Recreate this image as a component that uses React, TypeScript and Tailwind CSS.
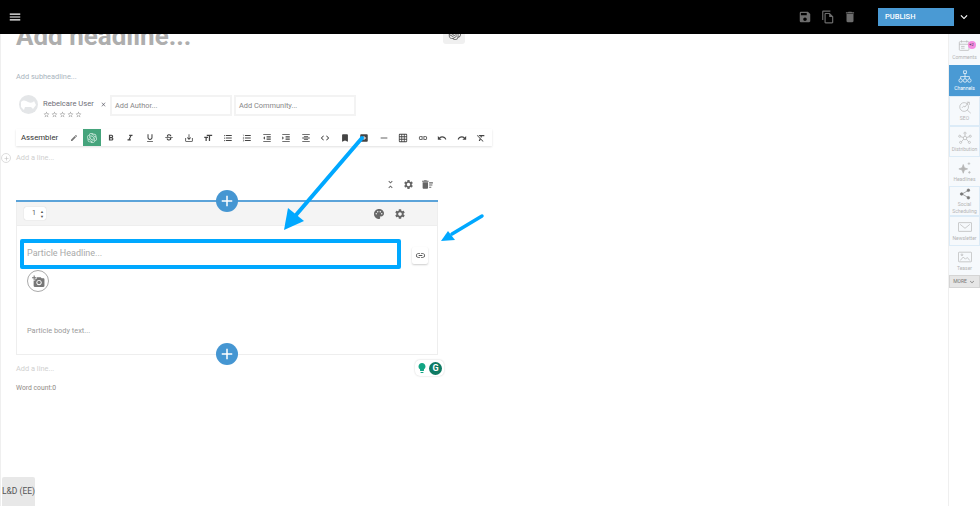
import * as React from 'react'
import {
  MdAddAPhoto, MdAddBox, MdBookmark, MdClose, MdCode, MdDelete, MdEdit, MdFormatAlignCenter, MdFormatBold,
  MdFormatClear, MdFormatIndentDecrease, MdFormatIndentIncrease, MdFormatItalic, MdFormatListBulleted,
  MdFormatListNumbered, MdFormatSize, MdFormatUnderlined, MdGridOn, MdHorizontalRule, MdLink, MdMenu, MdPalette,
  MdRedo, MdSave, MdSettings, MdStrikethroughS, MdUndo, MdAdd, MdKeyboardArrowDown, MdUnfoldLess, MdDeleteSweep,
  MdLightbulb, MdOutlineFileCopy, MdStarBorder, MdOutlineSaveAlt,
} from 'react-icons/md'
import { SiOpenai } from 'react-icons/si'

const toolbarIcons = [
  MdFormatBold, MdFormatItalic, MdFormatUnderlined, MdStrikethroughS, MdOutlineSaveAlt, MdFormatSize,
  MdFormatListBulleted, MdFormatListNumbered, MdFormatIndentDecrease, MdFormatIndentIncrease, MdFormatAlignCenter,
  MdCode, MdBookmark, MdAddBox, MdHorizontalRule, MdGridOn, MdLink, MdUndo, MdRedo, MdFormatClear,
]

// thin line icons of the side rail, drawn on a 16 box
const railPaths: Record<string, React.ReactNode> = {
  Comments: (
    <>
      <rect x="1.5" y="3" width="11" height="10" rx="1" />
      <path d="M1.5 6h11M4 1.5v2.5M10 1.5v2.5M3.5 8.5h4M3.5 10.5h4" />
    </>
  ),
  Channels: (
    <>
      <rect x="6.5" y="1" width="3" height="3" />
      <path d="M8 4v3M3 10V7.5h10V10M8 7v3" />
      <circle cx="3" cy="12" r="2" />
      <circle cx="8" cy="12" r="2" />
      <circle cx="13" cy="12" r="2" />
    </>
  ),
  SEO: (
    <>
      <circle cx="7" cy="8" r="5" />
      <path d="M10.5 11.5L14.5 15M4.5 9l2-2 1.5 1 4-5.5M10 2.5h3v3" />
    </>
  ),
  Distribution: (
    <>
      <circle cx="8" cy="8" r="2" />
      <circle cx="8" cy="2.5" r="1.2" />
      <circle cx="2" cy="6" r="1.2" />
      <circle cx="14" cy="6" r="1.2" />
      <circle cx="3" cy="13" r="1.2" />
      <circle cx="13" cy="13" r="1.2" />
      <path d="M8 4v2M3 6.5l3.2 1M13 6.5l-3.2 1M4 12.3l2.5-3M12 12.3l-2.5-3" />
    </>
  ),
  Headlines: (
    <>
      <path d="M6 4l1.3 3.7L11 9l-3.7 1.3L6 14l-1.3-3.7L1 9l3.7-1.3z" fill="currentColor" />
      <path d="M12.5 1.5v3M11 3h3M13 11.5v3M11.5 13h3" />
    </>
  ),
  'Social Scheduling': (
    <>
      <circle cx="12.5" cy="3" r="1.8" fill="currentColor" />
      <circle cx="3.5" cy="8" r="1.8" fill="currentColor" />
      <circle cx="12.5" cy="13" r="1.8" fill="currentColor" />
      <path d="M12 3.5L4 8l8 4.5" />
    </>
  ),
  Newsletter: (
    <>
      <rect x="0.5" y="3" width="15" height="10" rx="0.5" />
      <path d="M2.5 5L8 9.5 13.5 5" />
    </>
  ),
  Teaser: (
    <>
      <rect x="0.5" y="2.5" width="15" height="11" rx="1" />
      <path d="M2.5 12l3.5-4 2.5 2.5 2-2 3 3.5" />
      <circle cx="4.5" cy="5.5" r="1" />
    </>
  ),
}

const sideItems = [
  { label: 'Comments', h: 'h-[31px]' },
  { label: 'Channels', h: 'h-[31px]', active: true },
  { label: 'SEO', h: 'h-[30px]', boxed: true },
  { label: 'Distribution', h: 'h-[31px]', boxed: true },
  { label: 'Headlines', h: 'h-[29px]' },
  { label: 'Social Scheduling', h: 'h-[30px]', boxed: true },
  { label: 'Newsletter', h: 'h-[30px]', boxed: true },
  { label: 'Teaser', h: 'h-[29px]' },
]

const PlusButton = () => (
  <div className="w-[22px] h-[22px] rounded-full bg-[#4596d2] flex items-center justify-center text-white">
    <MdAdd size={18} />
  </div>
)

export default function App() {
  return (
    <div className="relative w-[980px] h-[506px] overflow-hidden bg-white flex flex-col font-['Roboto',sans-serif]">
      {/* Top bar */}
      <header className="relative z-10 h-[34px] shrink-0 bg-black flex items-center pl-[8px] text-white">
        <MdMenu size={14} />
        <div className="ml-auto flex items-center text-[#6d6d6d]">
          <MdSave size={14} />
          <MdOutlineFileCopy size={14} className="ml-[9px]" />
          <MdDelete size={14} className="ml-[8px]" />
        </div>
        <div className="ml-[21px] w-[76px] h-[18px] bg-[#4a9ad4] flex items-center pl-[7px] text-[7.5px] font-medium text-white">PUBLISH</div>
        <MdKeyboardArrowDown size={14} className="ml-[3px] mr-[9px]" />
      </header>

      <div className="flex flex-1 min-h-0">
        {/* Editor */}
        <main className="relative flex-1 min-w-0 border-l border-[#efefef]">
          <div className="-mt-[17px] ml-[15px] h-[39px]">
            <div className="text-[26px] leading-[39px] font-bold text-[#aeaeae] whitespace-nowrap">Add headline...</div>
            <div className="absolute left-[442px] -top-[12px] w-[22px] h-[22px] rounded-[3px] bg-[#f0f0f0] flex items-center justify-center text-[#666]">
              <SiOpenai size={13} />
            </div>
          </div>

          <div className="mt-[16px] ml-[15px] text-[7.4px] leading-[10px] text-[#a9b4bd]">Add subheadline...</div>

          <div className="mt-[13px] ml-[18px] flex items-start">
            <div className="w-[19px] h-[19px] rounded-full bg-[#e4e6e8] overflow-hidden">
              <svg viewBox="0 0 19 19" className="w-full h-full">
                <path d="M2 7c3-3 5-1 7 0s5 1 6-1l2 4-3 4-2-2H6l-1 3-3-3z" fill="#fff" />
              </svg>
            </div>
            <div className="ml-[5px] w-[58px]">
              <div className="mt-[3px] flex items-center text-[7.6px] leading-[12px] text-[#6e6e78] whitespace-nowrap">
                Rebelcare User
                <MdClose size={7} className="ml-[6px] shrink-0" />
              </div>
              <div className="mt-[1px] flex gap-[1px] text-[#9a9a9a]">
                {[0, 1, 2, 3, 4].map((i) => <MdStarBorder key={i} size={7} />)}
              </div>
            </div>
            <div className="ml-[9px] w-[122px] h-[21px] border-2 border-[#f3f3f3] flex items-center pl-[3px] text-[7.4px] text-[#888]">Add Author...</div>
            <div className="ml-[2px] w-[122px] h-[21px] border-2 border-[#f3f3f3] flex items-center pl-[3px] text-[7.4px] text-[#888]">Add Community...</div>
          </div>

          {/* Toolbar */}
          <div className="mt-[11px] ml-[15px] w-[476px] h-[17px] flex items-center bg-white shadow-[0_1px_2px_rgba(0,0,0,0.12)] text-[#444]">
            <span className="ml-[5px] w-[49px] text-[7.8px] text-[#333]">Assembler</span>
            <MdEdit size={8} className="text-[#777]" />
            <div className="ml-[5px] w-[18px] h-[17px] bg-[#45a47c] flex items-center justify-center text-[#d8efe5]">
              <SiOpenai size={10} />
            </div>
            <div className="flex">
              {toolbarIcons.map((Icon, i) => (
                <div key={i} className="w-[19.5px] flex justify-center"><Icon size={10} /></div>
              ))}
            </div>
          </div>

          <div className="mt-[7px] flex items-center h-[10px]">
            <div className="w-[10px] h-[10px] rounded-full border border-[#ddd] flex items-center justify-center text-[#bbb]">
              <MdAdd size={7} />
            </div>
            <span className="ml-[5px] text-[7.4px] text-[#cfcfcf]">Add a line...</span>
          </div>

          <div className="mt-[15px] ml-[384px] flex items-center h-[12px] text-[#666] gap-[7px] w-fit">
            <MdUnfoldLess size={11} />
            <MdSettings size={11} />
            <MdDeleteSweep size={13} />
          </div>

          {/* Particle */}
          <section className="relative mt-[10px] ml-[15px] w-[422px] h-[155px] border border-[#eee] border-t-0">
            <div className="absolute left-[199px] -top-[10px] z-[1]"><PlusButton /></div>
            <div className="-ml-px -mr-px h-[2px] bg-[#5ba3d9]" />
            <div className="h-[24px] bg-[#f4f4f4] border-b border-[#eee] flex items-center pl-[7px] text-[#666]">
              <div className="w-[22px] h-[13px] bg-white rounded-[2px] shadow-[0_0_1px_rgba(0,0,0,0.25)] flex items-center pl-[8px] text-[7px] text-[#555]">
                1<span className="ml-[4px] flex flex-col text-[4px] leading-[5px]"><span>▲</span><span>▼</span></span>
              </div>
              <MdPalette size={12} className="ml-[327px]" />
              <MdSettings size={12} className="ml-[9px]" />
            </div>

            <div className="mt-[13px] ml-[3px] flex items-center">
              <div className="w-[381px] h-[30px] border-[4px] border-[#00a8ff] rounded-[2px] flex items-center pl-[3px] text-[9px] text-[#a9a9a9]">Particle Headline...</div>
              <div className="ml-[11px] mt-[2px] w-[16px] h-[17px] rounded-[2px] bg-white shadow-[0_1px_2px_rgba(0,0,0,0.2)] flex items-center justify-center text-[#555]">
                <MdLink size={11} />
              </div>
            </div>
            <div className="mt-[1px] ml-[10px] w-[22px] h-[22px] rounded-full border border-[#aaa] flex items-center justify-center text-[#777]">
              <MdAddAPhoto size={13} />
            </div>
            <div className="mt-[34px] ml-[10px] text-[7.4px] leading-[10px] text-[#9a9a9a]">Particle body text...</div>
            <div className="absolute left-[199px] -bottom-[11px]"><PlusButton /></div>
          </section>

          <div className="relative mt-[9px] ml-[15px] h-[10px] text-[7.4px] leading-[10px] text-[#cfcfcf]">
            Add a line...
            <div className="absolute left-[399px] -top-[4px] w-[29px] h-[16px] rounded-[5px] bg-white shadow-[0_0_2px_rgba(0,0,0,0.2)] flex items-center pl-[1px]">
              <MdLightbulb size={12} className="text-[#12a584]" />
              <div className="ml-[1px] w-[13px] h-[13px] rounded-full bg-[#0f7a63] text-white text-[9px] leading-[13px] text-center font-bold">G</div>
            </div>
          </div>

          <div className="mt-[9px] ml-[15px] text-[6.8px] leading-[10px] text-[#8f8a85]">Word count:0</div>

          <div className="absolute left-[1px] bottom-0 w-[33px] h-[29px] rounded-t-[2px] bg-[#e8e8e8] flex items-center justify-center text-[8.5px] text-[#555] whitespace-nowrap">L&amp;D (EE)</div>
        </main>

        {/* Side rail */}
        <aside className="w-[32px] shrink-0 border-l border-[#efefef] flex flex-col items-stretch">
          {sideItems.map(({ label, h, active, boxed }) => (
            <div
              key={label}
              className={`${h} flex flex-col items-center justify-center gap-[1px] text-center text-[5px] leading-[7px] ${
                active ? 'bg-[#4a9ad4] text-white' : 'bg-[#f6f9fc] text-[#b4b4b4]'
              } ${boxed ? 'border border-[#dcebf7]' : ''}`}
            >
              <div className="relative">
                <svg viewBox="0 0 16 16" fill="none" stroke="currentColor" strokeWidth="0.8" className={`${label === 'Social Scheduling' ? 'w-[12px] h-[12px] text-[#777]' : 'w-[14px] h-[14px]'}`}>
                  {railPaths[label]}
                </svg>
                {label === 'Comments' && (
                  <span className="absolute -right-[4px] top-[2px] w-[8px] h-[8px] rounded-full bg-[#f48ce0] text-[4px] leading-[8px] text-[#333]">+2</span>
                )}
              </div>
              <span>{label}</span>
            </div>
          ))}
          <div className="h-[13px] bg-[#e6e6e6] border border-[#d5d5d5] flex items-center justify-center text-[5px] text-[#777]">
            MORE <MdKeyboardArrowDown size={8} className="ml-[1px]" />
          </div>
        </aside>
      </div>

      {/* Annotation arrows */}
      <svg className="absolute inset-0 z-20 pointer-events-none" width="980" height="506" viewBox="0 0 980 506">
        <path d="M362 138 L296 215" stroke="#00a8ff" strokeWidth="4" strokeLinecap="round" />
        <path d="M284 230 L288 208 L304 221 Z" fill="#00a8ff" />
        <path d="M482 216 L452 234" stroke="#00a8ff" strokeWidth="3.5" strokeLinecap="round" />
        <path d="M441 241 L448 231 L455 240 Z" fill="#00a8ff" />
      </svg>
    </div>
  )
}
